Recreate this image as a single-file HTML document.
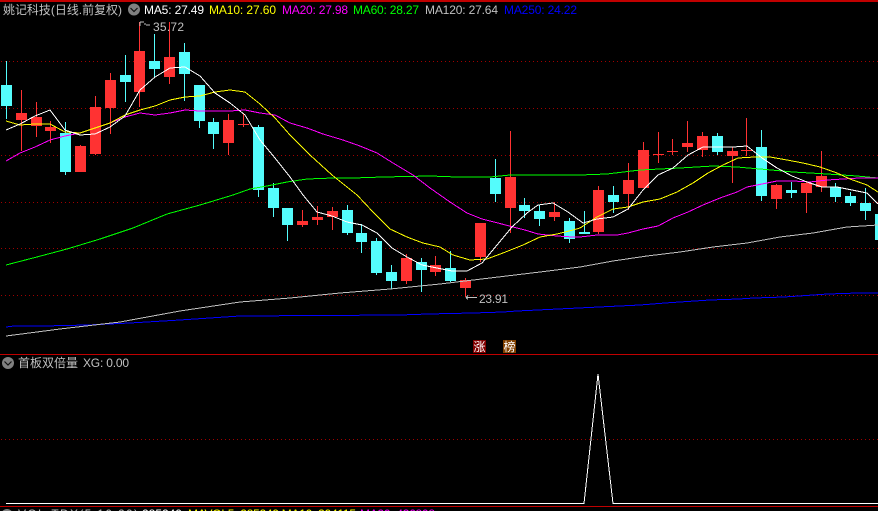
<!DOCTYPE html>
<html><head><meta charset="utf-8"><style>
html,body{margin:0;padding:0;background:#000;width:878px;height:511px;overflow:hidden}
svg{display:block}
text{font-family:"Liberation Sans","Noto Sans CJK SC",sans-serif;font-size:12px}
.c{shape-rendering:crispEdges}
polyline{fill:none;stroke-width:1;shape-rendering:crispEdges}
</style></head><body>
<svg width="878" height="511" viewBox="0 0 878 511" xmlns="http://www.w3.org/2000/svg">
<rect width="878" height="511" fill="#000"/>
<g class="c" stroke="#a00000" stroke-width="1" stroke-dasharray="1 3">
<line x1="1" y1="61.5" x2="878" y2="61.5"/><line x1="1" y1="108.5" x2="878" y2="108.5"/><line x1="1" y1="155.5" x2="878" y2="155.5"/><line x1="1" y1="202.5" x2="878" y2="202.5"/><line x1="1" y1="248.5" x2="878" y2="248.5"/><line x1="1" y1="295.5" x2="878" y2="295.5"/><line x1="1" y1="439.5" x2="878" y2="439.5"/>
</g>
<path class="c" fill="#54fcfc" d="M1 85h11v21h-11zM6 61h1v58h-1zM60 133h11v39h-11zM65 122h1v53h-1zM120 75h11v7h-11zM125 55h1v47h-1zM149 61h11v8h-11zM154 34h1v44h-1zM179 52h11v22h-11zM184 43h1v58h-1zM194 85h11v36h-11zM199 85h1v43h-1zM208 122h11v12h-11zM213 118h1v31h-1zM253 127h11v63h-11zM258 125h1v72h-1zM268 188h11v20h-11zM273 183h1v34h-1zM282 208h11v17h-11zM287 208h1v33h-1zM342 210h11v23h-11zM347 205h1v30h-1zM356 233h11v9h-11zM361 224h1v29h-1zM371 241h11v32h-11zM376 238h1v37h-1zM386 272h11v9h-11zM391 265h1v24h-1zM416 262h11v8h-11zM421 258h1v34h-1zM445 268h11v13h-11zM450 251h1v31h-1zM490 178h11v16h-11zM495 159h1v43h-1zM519 205h11v6h-11zM524 198h1v20h-1zM534 211h11v8h-11zM539 205h1v21h-1zM564 221h11v18h-11zM569 218h1v25h-1zM579 232h11v2h-11zM584 211h1v23h-1zM608 195h11v7h-11zM613 186h1v27h-1zM712 136h11v16h-11zM717 133h1v22h-1zM756 147h11v49h-11zM761 130h1v71h-1zM786 190h11v3h-11zM791 182h1v16h-1zM830 187h11v10h-11zM835 183h1v19h-1zM845 196h11v7h-11zM850 192h1v14h-1zM860 203h11v8h-11zM865 188h1v32h-1zM875 214h3v26h-3z"/>
<path class="c" fill="#ff3232" d="M16 113h11v7h-11zM21 90h1v61h-1zM31 117h11v9h-11zM36 102h1v35h-1zM45 127h11v4h-11zM50 121h1v22h-1zM75 146h11v26h-11zM80 145h1v27h-1zM90 107h11v47h-11zM95 96h1v59h-1zM105 80h11v28h-11zM110 73h1v61h-1zM134 51h11v41h-11zM139 22h1v85h-1zM164 57h11v20h-11zM169 22h1v62h-1zM223 120h11v23h-11zM228 114h1v41h-1zM238 124h11v1h-11zM243 113h1v14h-1zM297 221h11v4h-11zM302 210h1v17h-1zM312 217h11v3h-11zM317 206h1v19h-1zM327 211h11v6h-11zM332 207h1v23h-1zM401 258h11v23h-11zM406 254h1v30h-1zM430 265h11v7h-11zM435 256h1v20h-1zM460 280h11v8h-11zM465 278h1v19h-1zM475 223h11v34h-11zM480 223h1v39h-1zM505 177h11v31h-11zM510 131h1v102h-1zM549 212h11v5h-11zM554 202h1v19h-1zM593 190h11v42h-11zM598 186h1v48h-1zM623 180h11v14h-11zM628 163h1v47h-1zM638 150h11v38h-11zM643 142h1v46h-1zM653 154h11v1h-11zM658 132h1v31h-1zM667 151h11v1h-11zM672 139h1v16h-1zM682 143h11v4h-11zM687 121h1v31h-1zM697 136h11v14h-11zM702 132h1v25h-1zM727 151h11v5h-11zM732 147h1v36h-1zM741 150h11v1h-11zM746 118h1v38h-1zM771 185h11v14h-11zM776 184h1v25h-1zM801 183h11v10h-11zM806 181h1v32h-1zM816 176h11v11h-11zM821 151h1v41h-1z"/>
<polyline stroke="#0000ff" points="6,327 14,326 43,326 88,325 130,323 180,320 240,316 400,315 428,314 473,313 503,312 517,311 640,305 665,303 680,302 695,301 710,300 739,299 754,298 784,297 799,296 813,295 828,294 858,293 878,293"/>
<polyline stroke="#c0c0c0" points="6,336 60,329 120,322 180,311 240,302 290,298 340,293 390,289 440,284 490,278 540,272 580,267 613,261 647,256 680,252 713,247 747,243 780,237 813,233 847,227 878,225"/>
<polyline stroke="#00ff00" points="6,265 33,258 67,249 100,239 133,228 167,214 200,205 233,195 250,189 267,186 287,182 307,179 333,178 353,178 383,177 430,176 457,177 490,177 510,175 580,175 607,174 640,170 680,168 713,166 737,167 760,169 793,172 827,174 857,176 878,178"/>
<polyline stroke="#ff00ff" points="6,161 20,153 35,147 50,140 65,136 80,133 95,128 110,123 125,117 140,113 155,115 170,113 185,110 200,111 215,111 230,111 245,110 260,113 275,115 290,123 307,128 323,134 343,140 360,146 377,153 393,163 413,175 430,188 450,202 467,213 482,219 498,223 513,227 525,230 538,234 557,236 573,237 580,237 597,235 617,235 628,233 643,229 658,226 673,218 688,212 703,205 720,198 737,192 747,187 762,184 777,181 793,181 810,182 827,180 843,179 860,178 878,178"/>
<polyline stroke="#ffff00" points="6,121 20,125 35,124 50,124 65,132 80,133 95,128 110,123 125,115 140,110 155,106 170,100 185,97 200,96 215,92 230,90 245,92 260,104 275,118 290,135 310,155 332,175 357,195 373,212 390,229 407,237 423,243 440,247 453,255 470,260 487,259 503,253 523,245 540,237 557,234 573,230 580,228 597,217 613,209 628,207 643,202 660,199 677,192 693,183 708,173 723,165 738,158 755,157 770,157 787,160 803,163 820,167 837,173 850,179 867,185 878,192"/>
<polyline stroke="#ffffff" points="6,130 20,124 35,116 50,110 65,130 80,135 95,134 110,127 125,116 140,90 155,77 170,68 185,67 200,76 215,93 230,103 245,115 260,140 275,158 290,177 303,195 317,212 332,216 347,222 362,225 377,233 392,248 407,257 422,265 437,268 452,271 467,271 482,263 497,245 512,227 527,213 538,205 553,203 568,212 583,223 597,219 613,217 628,209 643,190 658,175 673,168 688,155 703,147 718,147 733,147 747,146 762,158 777,168 792,176 807,182 822,187 837,187 852,190 867,193 878,204"/>
<rect class="c" x="0" y="0" width="878" height="2" fill="#c00000"/>
<rect class="c" x="0" y="354" width="878" height="1" fill="#c00000"/>
<rect class="c" x="0" y="506" width="878" height="1" fill="#c00000"/>
<text x="3" y="14" fill="#c0c0c0" textLength="119" lengthAdjust="spacingAndGlyphs">姚记科技(日线.前复权)</text>
<circle cx="134" cy="9.5" r="6" fill="#808080"/><path d="M130.5 8l3.5 3.5 3.5-3.5" fill="none" stroke="#111" stroke-width="1.2"/>
<text x="144" y="14" fill="#ffffff" textLength="60">MA5: 27.49</text>
<text x="209" y="14" fill="#ffff00" textLength="67">MA10: 27.60</text>
<text x="282" y="14" fill="#ff00ff" textLength="66">MA20: 27.98</text>
<text x="353" y="14" fill="#00ff00" textLength="66">MA60: 28.27</text>
<text x="425" y="14" fill="#c0c0c0" textLength="73">MA120: 27.64</text>
<text x="504" y="14" fill="#0000ff" textLength="73">MA250: 24.22</text>
<path class="c" d="M140 22h4M140 22v4M144 24h2M146 25h4" stroke="#c0c0c0" fill="none"/>
<text x="153" y="31" fill="#c0c0c0" textLength="31">35.72</text>
<path class="c" d="M466 297.5h11M466 297.5l2-2M466 297.5l2 2" stroke="#c0c0c0" fill="none"/>
<text x="479" y="303" fill="#c0c0c0" textLength="29">23.91</text>
<rect class="c" x="473" y="340" width="13" height="13" fill="#800000"/>
<text x="473.5" y="351" fill="#ffffff">涨</text>
<rect class="c" x="503" y="340" width="13" height="13" fill="#804000"/>
<text x="503.5" y="351" fill="#ffffff">榜</text>
<circle cx="8" cy="363" r="6" fill="#808080"/><path d="M4.5 361.5l3.5 3.5 3.5-3.5" fill="none" stroke="#111" stroke-width="1.2"/>
<text x="18" y="367" fill="#c0c0c0" textLength="60" lengthAdjust="spacingAndGlyphs">首板双倍量</text>
<text x="83" y="367" fill="#c0c0c0" textLength="46">XG: 0.00</text>
<polyline stroke="#ffffff" points="6,503.5 584,503.5 598,374 613,503.5 878,503.5"/>
<circle cx="7" cy="515" r="6" fill="#808080"/>
<text x="18" y="518" fill="#c0c0c0" textLength="120">VOL-TDX(5,10,20)</text>
<text x="142" y="518" fill="#ffffff" textLength="40">285249</text>
<text x="188" y="518" fill="#ffff00" textLength="168">MAVOL5: 285249 MA10: 394115</text>
<text x="360" y="518" fill="#ff00ff" textLength="75">MA20: 436808</text>
</svg>
</body></html>
